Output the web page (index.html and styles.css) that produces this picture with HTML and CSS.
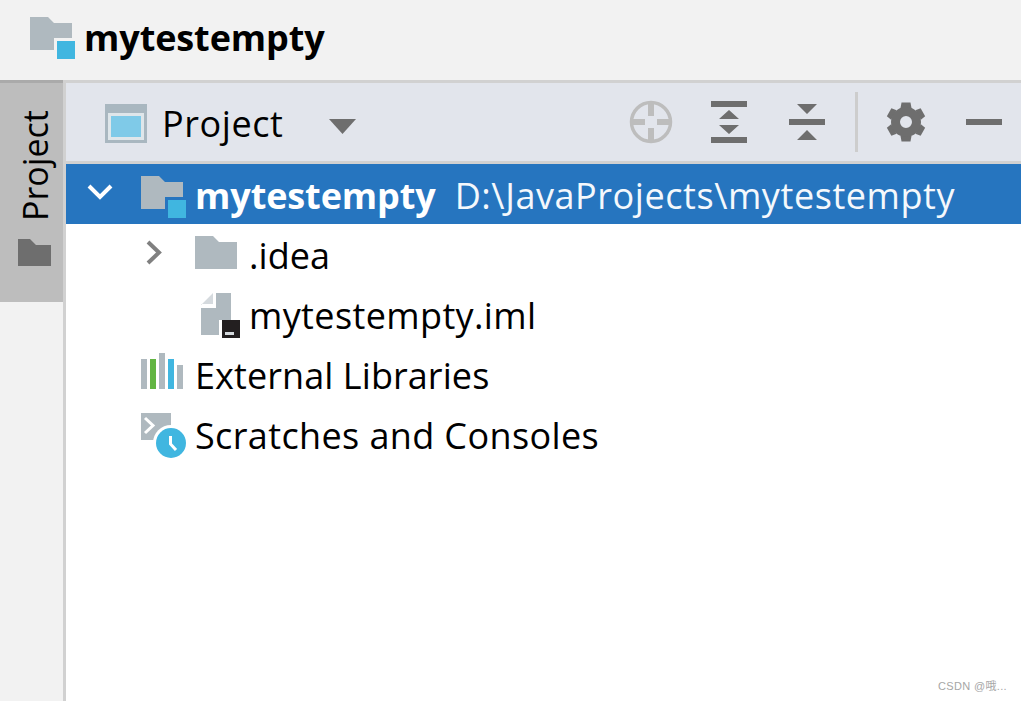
FILE: index.html
```html
<!DOCTYPE html>
<html lang="en">
<head>
<meta charset="utf-8">
<title>mytestempty</title>
<link rel="stylesheet" href="styles.css">
</head>
<body>
<div class="app">
  <header class="titlebar">
    <svg class="title-icon" width="46" height="42" viewBox="0 0 46 42"><path class="c-folder" d="M1 0H19L25 6H43V21H25V33H1Z"/><rect class="c-blue" x="28" y="24" width="18" height="18"/></svg>
    <span class="title-text">mytestempty</span>
  </header>
  <div class="main">
    <aside class="sidebar">
      <div class="side-tab">
        <span class="side-label">Project</span>
        <svg class="side-icon" width="33" height="27" viewBox="0 0 33 27"><path class="c-dark" d="M0 0H12L18 6H33V27H0Z"/></svg>
      </div>
    </aside>
    <section class="panel">
      <div class="toolbar">
        <svg class="view-icon" width="42" height="39" viewBox="0 0 42 39"><rect class="c-frame" width="42" height="39"/><rect class="c-inner" x="3" y="9" width="36" height="27"/><rect class="c-sky" x="6" y="12" width="30" height="21"/></svg>
        <span class="view-name">Project</span>
        <svg class="view-caret" width="27" height="15" viewBox="0 0 27 15"><path class="c-dark" d="M0 0H27L13.500 15Z"/></svg>
        <div class="actions">
          <svg class="action" width="78" height="78" viewBox="0 0 78 78"><circle class="s-off" cx="39" cy="39" r="19.500" fill="none"/><path class="c-off" d="M36 19H42V33H36ZM36 45H42V59H36ZM19 36H33V42H19ZM45 36H59V42H45Z"/></svg>
          <svg class="action" width="78" height="78" viewBox="0 0 78 78"><path class="c-dark" d="M21 18H57V24H21ZM21 54H57V60H21ZM39 27L49 36H29ZM29 42H49L39 51Z"/></svg>
          <svg class="action" width="78" height="78" viewBox="0 0 78 78"><path class="c-dark" d="M21 36H57V42H21ZM29 21H49L39 31ZM39 47L49 57H29Z"/></svg>
          <div class="sep"></div>
          <svg class="action" width="78" height="78" viewBox="0 0 78 78">
            <defs><path id="tooth" d="M-5.500 -14H5.500L4.500 -19.500H-4.500Z"/></defs>
            <g class="c-dark" transform="translate(39 39)">
              <use href="#tooth"/>
              <use href="#tooth" transform="rotate(60)"/>
              <use href="#tooth" transform="rotate(120)"/>
              <use href="#tooth" transform="rotate(180)"/>
              <use href="#tooth" transform="rotate(240)"/>
              <use href="#tooth" transform="rotate(300)"/>
            </g>
            <circle class="s-gear" cx="39" cy="39" r="10.500" fill="none"/>
          </svg>
          <svg class="action action-last" width="76" height="78" viewBox="0 0 76 78"><rect class="c-dark" x="21" y="36" width="36" height="6"/></svg>
        </div>
      </div>
      <div class="tree">
        <div class="row row-selected">
          <svg class="arrow" width="75" height="60" viewBox="0 0 75 60"><path class="s-white" fill="none" d="M23 22L34 33L45 22"/></svg>
          <svg class="node-icon" width="55" height="60" viewBox="0 0 55 60"><path class="c-folder" d="M0 12H18L24 18H42V33H24V45H0Z"/><rect class="c-blue" x="27" y="36" width="18" height="18"/></svg>
          <span class="label label-bold">mytestempty</span>
          <span class="label path">D:\JavaProjects\mytestempty</span>
        </div>
        <div class="row depth-1">
          <svg class="arrow" width="75" height="60" viewBox="0 0 75 60"><path class="s-gray" fill="none" d="M28 18L39 28.500L28 39"/></svg>
          <svg class="node-icon" width="55" height="60" viewBox="0 0 55 60"><path class="c-folder" d="M0 12H18L24 18H42V45H0Z"/></svg>
          <span class="label label-tight">.idea</span>
        </div>
        <div class="row depth-1">
          <span class="arrow-space"></span>
          <svg class="node-icon" width="55" height="60" viewBox="0 0 55 60"><path class="c-pale" d="M6 21L18 9V20H6Z"/><path class="c-folder" d="M6 24H21V9H36V36H24V51H6Z"/><rect class="c-ink" x="27" y="36" width="18" height="18"/><rect class="c-pale" x="30" y="48" width="9" height="3"/></svg>
          <span class="label label-wide">mytestempty.iml</span>
        </div>
        <div class="row">
          <span class="arrow-space"></span>
          <svg class="node-icon" width="55" height="60" viewBox="0 0 55 60"><rect class="c-folder" x="0" y="15" width="6" height="30"/><rect class="c-green" x="9" y="15" width="6" height="30"/><rect class="c-folder" x="18" y="9" width="6" height="36"/><rect class="c-blue" x="27" y="15" width="6" height="30"/><rect class="c-folder" x="36" y="21" width="6" height="24"/></svg>
          <span class="label label-tight">External Libraries</span>
        </div>
        <div class="row">
          <span class="arrow-space"></span>
          <svg class="node-icon" width="55" height="60" viewBox="0 0 55 60"><rect class="c-folder" x="0" y="9" width="30" height="27"/><path class="s-paper" fill="none" d="M4 14L12 21.500L4 29"/><circle class="c-paper" cx="30" cy="39" r="18"/><circle class="c-blue" cx="30" cy="39" r="15"/><path class="s-paper" fill="none" d="M29.500 32V40L35 46"/></svg>
          <span class="label label-wide">Scratches and Consoles</span>
        </div>
      </div>
    </section>
  </div>
  <div class="watermark">CSDN @哦...</div>
</div>
</body>
</html>
```
FILE: styles.css
```css
* { box-sizing: border-box; }
html, body { margin: 0; padding: 0; height: 100%; background: #fff; overflow: hidden; }
body { font-family: "Open Sans", "Noto Sans CJK SC", sans-serif; color: #000; }
svg { display: block; flex: none; }

.app { position: relative; width: 1021px; height: 701px; display: flex; flex-direction: column; }

.titlebar { height: 80px; flex: none; background: #f2f2f2; display: flex; align-items: flex-start; padding: 17px 0 0 29px; }
.title-text { font-size: 36px; font-weight: 700; line-height: 42px; margin-left: 9px; letter-spacing: -0.1px; }

.main { flex: 1; display: flex; min-height: 0; }
.sidebar { width: 66px; flex: none; background: #f2f2f2; border-right: 3px solid #d1d1d1; }
.side-tab { height: 222px; background: #bdbdbd; border-top: 3px solid #aaaaaa; display: flex; flex-direction: column; align-items: center; padding: 24px 0 0 6px; }
.side-label { writing-mode: vertical-rl; transform: rotate(180deg); font-size: 34px; line-height: 40px; height: 114px; text-align: left; white-space: nowrap; }
.side-icon { margin-top: 18px; }

.panel { flex: 1; min-width: 0; display: flex; flex-direction: column; border-top: 3px solid #d1d1d1; }
.toolbar { height: 81px; flex: none; background: #e2e5ec; border-bottom: 3px solid #d1d1d1; display: flex; align-items: center; padding-left: 39px; }
.view-icon { margin-top: 2px; }
.view-name { font-size: 36px; line-height: 78px; padding-top: 4px; margin-left: 15px; letter-spacing: 0.57px; }
.view-caret { margin: 8px 0 0 46px; }
.actions { margin-left: auto; display: flex; align-items: center; height: 78px; }
.sep { width: 3px; height: 60px; margin: 0 9px; background: #cdcdcd; }

.tree { flex: 1; }
.row { height: 60px; display: flex; align-items: center; white-space: nowrap; font-size: 36px; }
.row-selected { background: #2675bf; color: #fff; }
.depth-1 { padding-left: 54px; }
.arrow-space { width: 75px; flex: none; }
.node-icon { margin-right: -1px; }
.label { line-height: 60px; padding-top: 4px; }
.label-bold { font-weight: 700; letter-spacing: -0.1px; }
.label-tight { letter-spacing: 0.08px; }
.label-wide { letter-spacing: 0.38px; }
.path { margin-left: 19px; color: #f4f8fc; letter-spacing: 0.57px; }

.c-folder { fill: #afb9bf; }
.c-blue { fill: #40b6e0; }
.c-dark { fill: #6e6e6e; }
.c-frame { fill: #a9b7c0; }
.c-inner { fill: #dfe6ea; }
.c-sky { fill: #7fcae8; }
.c-off { fill: #bdbdbd; }
.c-pale { fill: #d5dade; }
.c-ink { fill: #231f20; }
.c-green { fill: #62b543; }
.c-paper { fill: #fff; }
.s-off { stroke: #bdbdbd; stroke-width: 3.500px; }
.s-gear { stroke: #6e6e6e; stroke-width: 9px; }
.s-white { stroke: #fff; stroke-width: 4px; }
.s-gray { stroke: #808080; stroke-width: 4px; }
.s-paper { stroke: #fff; stroke-width: 3px; }

.watermark { position: absolute; right: 14px; bottom: 8px; font-family: "Liberation Sans", "Noto Sans CJK SC", sans-serif; font-size: 11px; line-height: 14px; letter-spacing: 0.35px; color: #a6a6a6; }
```
